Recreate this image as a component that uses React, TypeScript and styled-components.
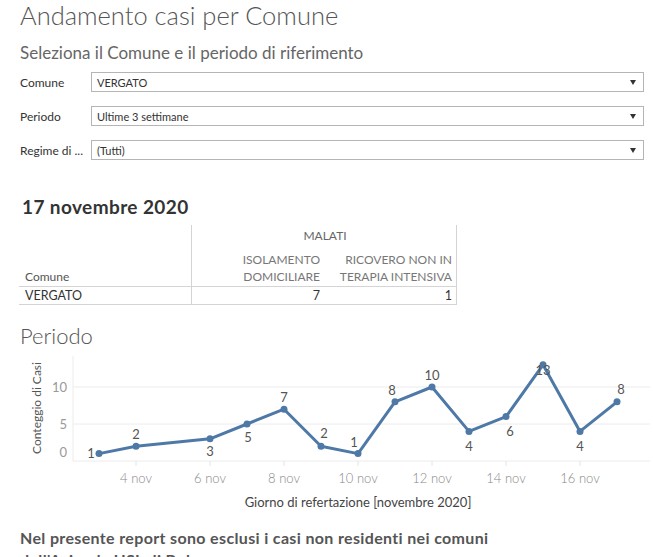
import React from "react";
import styled, { createGlobalStyle } from "styled-components";

const Global = createGlobalStyle`
  html, body { margin: 0; padding: 0; background: #ffffff; }
  body { font-family: "Lato", "Open Sans", sans-serif; color: #333; overflow: hidden; }
`;

const Page = styled.div`
  width: 653px;
  height: 557px;
  overflow: hidden;
  display: flex;
  flex-direction: column;
  & > * { flex-shrink: 0; }
`;

const Title = styled.h1`
  margin: 0;
  padding-left: 20px;
  height: 32px;
  line-height: 30px;
  font-size: 25.5px;
  font-weight: 300;
  color: #555;
`;

const Subtitle = styled.h2`
  margin: 10px 0 0;
  padding-left: 20px;
  height: 22px;
  line-height: 22px;
  font-size: 17px;
  font-weight: 400;
  color: #666;
`;

const Filters = styled.div`
  margin-top: 8px;
  padding-left: 20px;
  padding-right: 9px;
  display: flex;
  flex-direction: column;
  gap: 14px;
`;

const FilterRow = styled.div`
  display: grid;
  grid-template-columns: 71px 1fr;
  align-items: center;
  height: 20px;
`;

const FilterLabel = styled.span`
  font-size: 12px;
  color: #333;
  white-space: nowrap;
`;

const Select = styled.div`
  height: 20px;
  box-sizing: border-box;
  border: 1px solid #b5b5b5;
  display: flex;
  align-items: center;
  justify-content: space-between;
  padding: 0 7px 0 5px;
  font-size: 11px;
  color: #333;
`;

const Caret = styled.span`
  width: 0;
  height: 0;
  border-left: 3.5px solid transparent;
  border-right: 3.5px solid transparent;
  border-top: 5px solid #333;
`;

const DateHeading = styled.h3`
  margin: 34px 0 0;
  padding-left: 22px;
  height: 26px;
  line-height: 26px;
  font-size: 19px;
  letter-spacing: 0.4px;
  font-weight: 700;
  color: #333;
`;

const Table = styled.div`
  margin: 5px 0 0 19px;
  display: grid;
  grid-template-columns: 172px 133px 133px;
  grid-template-rows: 22px 39px 19px;
  width: 438px;
`;

const Cell = styled.div<{ $col: string; $row: string; $align?: string; $valign?: string; $left?: boolean; $right?: boolean; $top?: boolean; $bottom?: boolean }>`
  grid-column: ${(p) => p.$col};
  grid-row: ${(p) => p.$row};
  box-sizing: border-box;
  display: flex;
  flex-direction: column;
  justify-content: ${(p) => p.$valign || "center"};
  align-items: ${(p) => p.$align || "flex-start"};
  text-align: ${(p) => (p.$align === "flex-end" ? "right" : p.$align === "center" ? "center" : "left")};
  padding: 0 4px 1px 6px;
  border-left: ${(p) => (p.$left ? "1px solid #d4d4d4" : "none")};
  border-right: ${(p) => (p.$right ? "1px solid #d4d4d4" : "none")};
  border-top: ${(p) => (p.$top ? "1px solid #d4d4d4" : "none")};
  border-bottom: ${(p) => (p.$bottom ? "1px solid #d4d4d4" : "none")};
`;

const HeadText = styled.span<{ $tone?: string }>`
  font-size: 12px;
  line-height: 17px;
  color: ${(p) => p.$tone || "#777"};
`;

const BodyText = styled.span`
  font-size: 12.5px;
  line-height: 17px;
  color: #333;
`;

const SectionTitle = styled.h3`
  margin: 19px 0 0;
  padding-left: 20px;
  height: 24px;
  line-height: 24px;
  font-size: 22px;
  font-weight: 300;
  color: #555;
`;

const Chart = styled.svg`
  display: block;
  margin-top: 4px;
  font-family: "Lato", "Open Sans", sans-serif;
`;

const Footer = styled.p`
  margin: 13px 0 0;
  padding-left: 20px;
  width: 520px;
  font-size: 16px;
  letter-spacing: 0.35px;
  line-height: 22px;
  font-weight: 700;
  color: #555;
`;

const data: [number, number, number, number][] = [
  [3, 1, -8, -1],
  [4, 2, 0, -12],
  [6, 3, 0, 12],
  [7, 5, 1, 13],
  [8, 7, 0, -12],
  [9, 2, 3, -13],
  [10, 1, -4, -12],
  [11, 8, -3, -12],
  [12, 10, 0, -12],
  [13, 4, 0, 15],
  [14, 6, 4, 14],
  [15, 13, 0, 5],
  [16, 4, 0, 15],
  [17, 8, 4, -13],
];

const X = (d: number) => 99 + (d - 3) * 37;
const Y = (v: number) => 109 - 7.4 * v;

export default function App() {
  const path = data.map(([d, v], i) => `${i === 0 ? "M" : "L"}${X(d)} ${Y(v)}`).join(" ");
  return (
    <Page>
      <Global />
      <Title>Andamento casi per Comune</Title>
      <Subtitle>Seleziona il Comune e il periodo di riferimento</Subtitle>
      <Filters>
        <FilterRow>
          <FilterLabel>Comune</FilterLabel>
          <Select>VERGATO<Caret /></Select>
        </FilterRow>
        <FilterRow>
          <FilterLabel>Periodo</FilterLabel>
          <Select>Ultime 3 settimane<Caret /></Select>
        </FilterRow>
        <FilterRow>
          <FilterLabel>Regime di ...</FilterLabel>
          <Select>(Tutti)<Caret /></Select>
        </FilterRow>
      </Filters>
      <DateHeading>17 novembre 2020</DateHeading>
      <Table>
        <Cell $col="1" $row="1 / 3" $valign="flex-end">
          <HeadText $tone="#555">Comune</HeadText>
        </Cell>
        <Cell $col="2 / 4" $row="1" $align="center" $left $right>
          <HeadText $tone="#666">MALATI</HeadText>
        </Cell>
        <Cell $col="2" $row="2" $align="flex-end" $valign="flex-end" $left>
          <HeadText>ISOLAMENTO</HeadText>
          <HeadText>DOMICILIARE</HeadText>
        </Cell>
        <Cell $col="3" $row="2" $align="flex-end" $valign="flex-end" $right>
          <HeadText>RICOVERO NON IN</HeadText>
          <HeadText>TERAPIA INTENSIVA</HeadText>
        </Cell>
        <Cell $col="1" $row="3" $top $bottom>
          <BodyText>VERGATO</BodyText>
        </Cell>
        <Cell $col="2" $row="3" $align="flex-end" $left $top $bottom>
          <BodyText>7</BodyText>
        </Cell>
        <Cell $col="3" $row="3" $align="flex-end" $right $top $bottom>
          <BodyText>1</BodyText>
        </Cell>
      </Table>
      <SectionTitle>Periodo</SectionTitle>
      <Chart width={653} height={162} viewBox="0 0 653 162">
        <line x1={73} y1={4} x2={73} y2={109} stroke="#ececec" />
        {[0, 5, 10].map((v) => (
          <line key={v} x1={73} y1={Y(v)} x2={650} y2={Y(v)} stroke="#ececec" />
        ))}
        {[4, 6, 8, 10, 12, 14, 16].map((d) => (
          <line key={d} x1={X(d)} y1={109} x2={X(d)} y2={114} stroke="#e4e4e4" />
        ))}
        {[0, 5, 10].map((v) => (
          <text key={v} x={67} y={v === 0 ? 100 : Y(v)} dominantBaseline="central" textAnchor="end" fontSize={13} fill="#999">
            {v}
          </text>
        ))}
        <text transform="translate(36 56) rotate(-90)" textAnchor="middle" dominantBaseline="central" fontSize={12} fill="#555">
          Conteggio di Casi
        </text>
        {[4, 6, 8, 10, 12, 14, 16].map((d) => (
          <text key={d} x={X(d)} y={126} textAnchor="middle" dominantBaseline="central" fontSize={13} fontWeight={300} fill="#888">
            {d} nov
          </text>
        ))}
        <text x={358} y={150} textAnchor="middle" dominantBaseline="central" fontSize={13} fill="#444">
          Giorno di refertazione [novembre 2020]
        </text>
        <path d={path} fill="none" stroke="#4e79a7" strokeWidth={3} strokeLinejoin="round" strokeLinecap="round" />
        {data.map(([d, v]) => (
          <circle key={d} cx={X(d)} cy={Y(v)} r={3.5} fill="#4e79a7" />
        ))}
        {data.map(([d, v, dx, dy]) => (
          <text key={d} x={X(d) + dx} y={Y(v) + dy} textAnchor="middle" dominantBaseline="central" fontSize={13} fill="#555">
            {v}
          </text>
        ))}
      </Chart>
      <Footer>Nel presente report sono esclusi i casi non residenti nei comuni dell'Azienda USL di Bologna</Footer>
    </Page>
  );
}
